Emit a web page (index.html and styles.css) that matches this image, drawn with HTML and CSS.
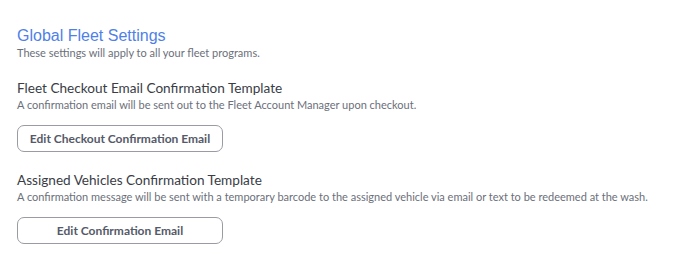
FILE: index.html
```html
<!DOCTYPE html>
<html lang="en">
  <head>
    <meta charset="UTF-8" />
    <title>Global Fleet Settings</title>
    <link rel="stylesheet" href="styles.css">
  </head>
  <body>
    <div class="settings">
      <div class="settings-header">
        <h2>Global Fleet Settings</h2>
        <p>These settings will apply to all your fleet programs.</p>
      </div>

      <div class="section">
        <h3>Fleet Checkout Email Confirmation Template</h3>
        <p>A confirmation email will be sent out to the Fleet Account Manager upon checkout.</p>
        <button class="btn">Edit Checkout Confirmation Email</button>
      </div>

      <div class="section">
        <h3>Assigned Vehicles Confirmation Template</h3>
        <p>A confirmation message will be sent with a temporary barcode to the assigned vehicle via email or text to be redeemed at the wash.</p>
        <button class="btn">Edit Confirmation Email</button>
      </div>
    </div>
  </body>
</html>
```

FILE: styles.css
```css
body {
  margin: 0;
  font-family: 'Lato', sans-serif;
  background: #ffffff;
  color: #333;
}

.settings {
  padding: 27px 17px 0;
}

.settings-header h2 {
  margin: 0;
  font-family: 'Liberation Sans', Arial, sans-serif;
  font-weight: normal;
  font-size: 16px;
  line-height: 18px;
  color: #4f7fe8;
}

.settings-header p {
  margin: 0;
  font-size: 11px;
  line-height: 15px;
  color: #6b6f7a;
}

.section {
  margin-top: 19px;
}

.section h3 {
  margin: 0;
  font-weight: normal;
  font-size: 13.6px;
  line-height: 18px;
  color: #3a3d45;
}

.section p {
  margin: 0;
  font-size: 11px;
  line-height: 16px;
  color: #6b6f7a;
}

.btn {
  display: block;
  margin-top: 12px;
  width: 206px;
  height: 27px;
  padding: 0;
  border: 1px solid #9a9ca3;
  border-radius: 7px;
  background: #ffffff;
  font-family: 'Lato', sans-serif;
  font-weight: bold;
  font-size: 12px;
  color: #555a68;
  cursor: pointer;
}
```
